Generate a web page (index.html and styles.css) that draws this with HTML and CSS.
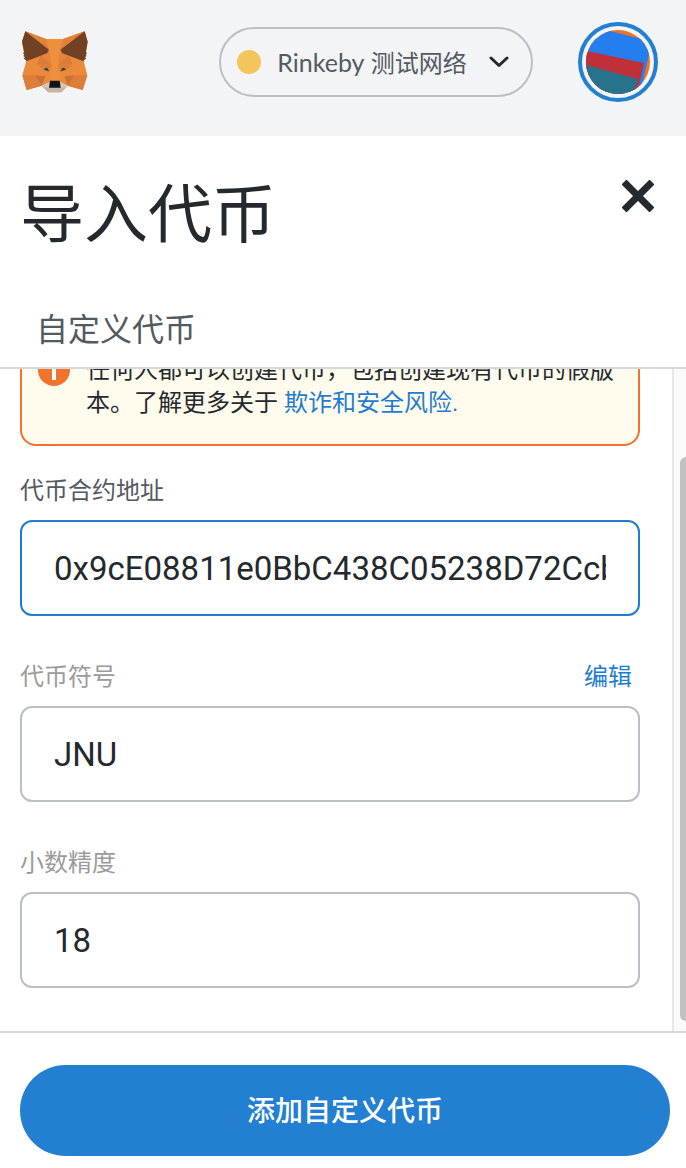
FILE: index.html
```html
<!DOCTYPE html>
<html lang="zh-CN">
<head>
<meta charset="utf-8">
<meta name="viewport" content="width=device-width, initial-scale=1">
<title>导入代币</title>
<link rel="stylesheet" href="styles.css">
</head>
<body>
<div class="app">
  <header class="app-header">
    <svg class="fox" viewBox="36 34 198 186" role="img" aria-label="MetaMask">
      <path fill="#ea8a3a" d="M46 35 108 58H159L224 35 233 66 227 98 221 124 232 167 218 211 173 198 154 218H115L95 198 50 211 37 167 49 124 42 98 36 66Z"/>
      <path fill="#e3803a" d="M46 35 108 58 117 90ZM224 35 159 58 151 90Z"/>
      <path fill="#ed8f3d" d="M108 58H159L151 92 143 136 151 184H117L126 136 117 92Z"/>
      <path fill="#dc7d39" d="M37 167H78L95 198 50 211ZM232 167H191L173 198 218 211Z"/>
      <path fill="#cb7136" d="M76 167 106 170 95 198ZM193 167 163 170 173 198Z"/>
      <path fill="#da7b37" d="M92 106 81 134 124 135ZM177 106 188 134 145 135Z"/>
      <path fill="#e5843a" d="M92 106 117 92 124 135ZM177 106 151 92 145 135Z"/>
      <path fill="#dd7e38" d="M82 134 124 135 118 158 98 148ZM187 134 145 135 151 158 171 148Z"/>
      <path fill="#704223" d="M46 35 117 90 111 101 49 125 47 120 41 117 45 113 40 109 43 105 39 101 42 97 36 66ZM224 35 151 90 157 101 221 125 223 120 229 117 225 113 230 109 227 105 231 101 228 97 233 66Z"/>
      <path fill="#31424d" d="M101 150 107 144 113 146 117 155ZM168 150 162 144 156 146 152 155Z"/>
      <path fill="#c5b5a7" d="M95 198 118 187H152L173 198 154 218H115Z"/>
      <path fill="#d9c8b9" d="M95 198 118 187 117 204 100 203ZM173 198 152 187 152 204 169 203Z"/>
      <path fill="#121518" d="M120 183H149L152 204H117Z"/>
    </svg>
    <button class="network" type="button">
      <span class="network-dot"></span>
      <span class="network-name"><span class="network-latin">Rinkeby</span> 测试网络</span>
      <svg class="chevron" viewBox="0 0 20 12" aria-hidden="true"><path d="M2 2 10 9.500 18 2"/></svg>
    </button>
    <button class="account" type="button" aria-label="账户">
      <svg class="avatar" viewBox="0 0 64 64" aria-hidden="true">
        <clipPath id="disc"><circle cx="32" cy="32" r="32"/></clipPath>
        <g clip-path="url(#disc)">
          <path fill="#f37324" d="M0 0H64V64H0Z"/>
          <path fill="#257eed" d="M-4-6 64 11V20L54 64H-4Z"/>
          <path fill="#c03039" d="M-4 20 58 33 51 64H-4Z"/>
          <path fill="#26738b" d="M-4 34 52 49 48 66H-4Z"/>
        </g>
      </svg>
    </button>
  </header>

  <section class="page-head">
    <div class="title-row">
      <h1 class="title">导入代币</h1>
      <button class="close" type="button" aria-label="关闭">
        <svg viewBox="0 0 32 32" aria-hidden="true"><path d="M2 2 30 30M30 2 2 30"/></svg>
      </button>
    </div>
    <div class="tabs"><button class="tab" type="button">自定义代币</button></div>
  </section>

  <main class="scroll">
    <form class="content" id="token-form">
      <div class="alert">
        <svg class="alert-icon" viewBox="0 0 32 32" aria-hidden="true"><circle cx="16" cy="16" r="16"/><path d="M14 7H18V11H14ZM14 14H18V26H14Z"/></svg>
        <p class="alert-text">任何人都可以创建代币，包括创建现有代币的假版本。了解更多关于 <a href="#">欺诈和安全风险.</a></p>
      </div>
      <div class="field">
        <div class="label-row"><label class="label" for="address">代币合约地址</label></div>
        <input class="input input-active" id="address" type="text" value="0x9cE08811e0BbC438C05238D72Ccb">
      </div>
      <div class="field">
        <div class="label-row"><label class="label label-muted" for="symbol">代币符号</label><button class="edit" type="button">编辑</button></div>
        <input class="input" id="symbol" type="text" value="JNU">
      </div>
      <div class="field">
        <div class="label-row"><label class="label label-muted" for="decimals">小数精度</label></div>
        <input class="input" id="decimals" type="text" value="18">
      </div>
    </form>
    <div class="track"><div class="thumb"></div></div>
  </main>

  <footer class="footer"><button class="submit" type="submit" form="token-form">添加自定义代币</button></footer>
</div>
</body>
</html>
```
FILE: styles.css
```css
* { box-sizing: border-box; }

body {
  margin: 0;
  background: #fff;
  color: #24292e;
  font-family: Roboto, "Noto Sans CJK SC", sans-serif;
}

button {
  margin: 0;
  padding: 0;
  border: 0;
  background: none;
  color: inherit;
  font: inherit;
  cursor: pointer;
}

svg { display: block; }

.app {
  display: flex;
  flex-direction: column;
  height: 100vh;
  overflow: hidden;
}

.app-header {
  display: flex;
  flex: none;
  align-items: center;
  justify-content: space-between;
  padding: 22px 28px 34px 22px;
  background: #f2f4f6;
}

.fox { width: 66px; height: 62px; }

.network {
  display: flex;
  align-items: center;
  height: 70px;
  margin-left: 86px;
  padding: 0 22px 0 16px;
  border: 2px solid #bbc0c5;
  border-radius: 35px;
  color: #535a61;
  font-family: Lato, "Noto Sans CJK SC", sans-serif;
  font-size: 24px;
  line-height: 34px;
}

.network-latin { font-size: 25px; }

.network-dot {
  width: 24px;
  height: 24px;
  margin-right: 16px;
  border-radius: 50%;
  background: #f3c55b;
}

.chevron {
  width: 20px;
  height: 12px;
  margin-left: 22px;
  fill: none;
  stroke: #24292e;
  stroke-width: 3;
  stroke-linecap: round;
  stroke-linejoin: round;
}

.account {
  padding: 4px;
  border: 4px solid #237fd2;
  border-radius: 50%;
}

.avatar { width: 64px; height: 64px; }

.page-head {
  flex: none;
  border-bottom: 2px solid #d6d9dc;
}

.title-row {
  display: flex;
  align-items: flex-start;
  justify-content: space-between;
  padding: 32px 32px 0 20px;
}

.title {
  margin: 0;
  font-size: 64px;
  font-weight: 400;
  line-height: 96px;
}

.close { margin-top: 12px; }

.close svg {
  width: 32px;
  height: 32px;
  stroke: #24292e;
  stroke-width: 7;
}

.tabs { padding: 28px 20px 0; }

.tab {
  display: block;
  padding: 16px 16px 14px;
  color: #535a61;
  font-size: 32px;
  line-height: 45px;
}

.scroll {
  display: flex;
  flex: 1;
  min-height: 0;
  overflow: hidden;
}

/* Scrolled to the end: the content hangs from the bottom edge. */
.content {
  display: flex;
  flex: 1;
  flex-direction: column;
  justify-content: flex-end;
  min-width: 0;
  padding: 0 32px 43px 20px;
}

.alert {
  display: flex;
  flex: none;
  gap: 16px;
  align-items: flex-start;
  margin-bottom: 28px;
  padding: 24px 16px;
  border: 2px solid #f0732e;
  border-radius: 16px;
  background: #fffbed;
}

.alert-icon { flex: none; width: 32px; height: 32px; }
.alert-icon circle { fill: #f0732e; }
.alert-icon path { fill: #fff; }

.alert-text {
  margin: 0;
  font-size: 24px;
  line-height: 33px;
}

a, .edit { color: #1f7dd1; text-decoration: none; }

.field { flex: none; }
.field + .field { margin-top: 44px; }

.label-row {
  display: flex;
  justify-content: space-between;
  padding: 0 8px 12px 0;
  font-size: 24px;
  line-height: 34px;
}

.label { color: #535a61; }
.label-muted { color: #9b9b9b; }

.input {
  display: block;
  width: 100%;
  height: 96px;
  padding: 0 32px;
  border: 2px solid #bbc0c5;
  border-radius: 12px;
  outline: none;
  background: #fff;
  color: #24292e;
  font: 400 33px/45px Roboto, "Noto Sans CJK SC", sans-serif;
}

.input-active { border-color: #1f7dd1; }

.track {
  display: flex;
  flex: none;
  flex-direction: column;
  justify-content: flex-end;
  width: 14px;
  padding: 0 0 10px 6px;
  border-left: 2px solid #e8e8e8;
  background: #fafafa;
}

.thumb {
  height: 86.5%;
  border-radius: 8px 0 0 8px;
  background: #c1c1c1;
}

.footer {
  flex: none;
  padding: 32px 16px 12px 20px;
  border-top: 2px solid #d6d9dc;
}

.submit {
  display: block;
  width: 100%;
  height: 91px;
  padding-top: 2px;
  border-radius: 46px;
  background: #237fd2;
  color: #fff;
  font-size: 28px;
  font-weight: 500;
  line-height: 40px;
}
```
